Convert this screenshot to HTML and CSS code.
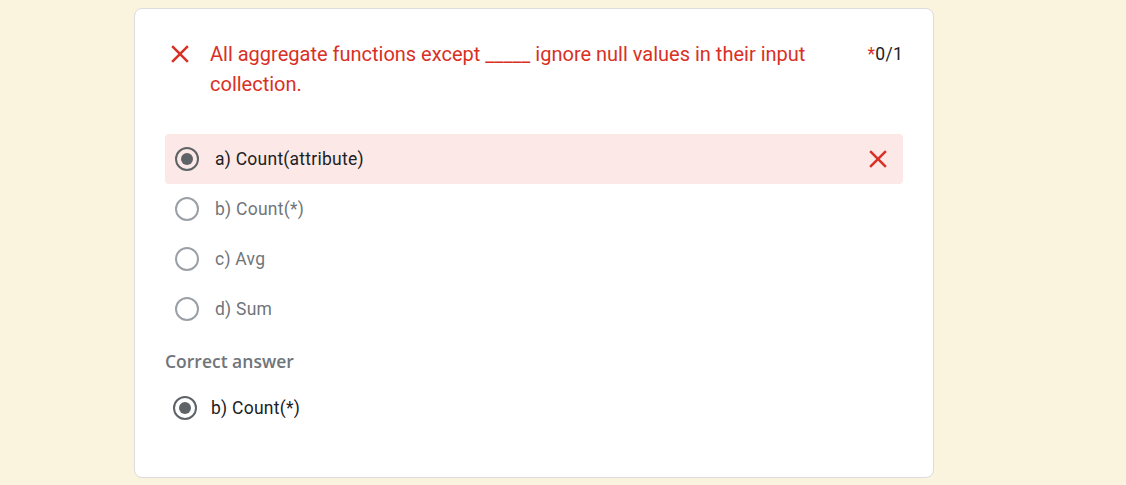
FILE: index.html
```html
<!DOCTYPE html>
<html>
<head>
<meta charset="utf-8">
<link rel="stylesheet" href="styles.css">
</head>
<body>
<div class="card">
  <div class="q-head">
    <svg class="x-icon" viewBox="0 0 24 24"><path d="M19 6.41L17.59 5 12 10.59 6.41 5 5 6.41 10.59 12 5 17.59 6.41 19 12 13.41 17.59 19 19 17.59 13.41 12z"/></svg>
    <div class="q-text">All aggregate functions except _____ ignore null values in their input collection.</div>
    <div class="points"><span class="req">*</span>0/1</div>
  </div>
  <div class="options">
    <div class="opt wrong">
      <span class="radio checked"></span>
      <span class="opt-text sel">a) Count(attribute)</span>
      <svg class="x-icon row-x" viewBox="0 0 24 24"><path d="M19 6.41L17.59 5 12 10.59 6.41 5 5 6.41 10.59 12 5 17.59 6.41 19 12 13.41 17.59 19 19 17.59 13.41 12z"/></svg>
    </div>
    <div class="opt"><span class="radio"></span><span class="opt-text">b) Count(*)</span></div>
    <div class="opt"><span class="radio"></span><span class="opt-text">c) Avg</span></div>
    <div class="opt"><span class="radio"></span><span class="opt-text">d) Sum</span></div>
  </div>
  <div class="correct-label">Correct answer</div>
  <div class="correct">
    <span class="radio checked thick"></span>
    <span class="opt-text sel">b) Count(*)</span>
  </div>
</div>
</body>
</html>
```
FILE: styles.css
```css
html, body { margin: 0; padding: 0; }
body {
  background: #faf3de;
  font-family: Roboto, "Noto Sans", sans-serif;
  height: 485px;
  overflow: hidden;
}
.card {
  box-sizing: border-box;
  margin: 8px 0 0 134px;
  width: 800px;
  height: 470px;
  background: #fff;
  border: 1px solid #dadce0;
  border-radius: 8px;
  padding: 30px 30px 0 30px;
}
.q-head {
  display: flex;
  align-items: flex-start;
}
.x-icon {
  width: 30px;
  height: 30px;
  fill: #d93025;
  flex: none;
}
.q-head .x-icon { margin-right: 15px; }
.q-text {
  flex: 1;
  color: #d93025;
  font-size: 20px;
  line-height: 30px;
  margin-right: 30px;
}
.points {
  font-size: 17.5px;
  letter-spacing: 0.25px;
  line-height: 30px;
  color: #202124;
}
.req { color: #d93025; }
.options { margin-top: 35px; }
.opt {
  display: flex;
  align-items: center;
  height: 50px;
  padding: 0 10px;
  border-radius: 4px;
}
.opt.wrong { background: #fce8e6; }
.radio {
  box-sizing: border-box;
  width: 24px;
  height: 24px;
  border: 2px solid #9aa0a6;
  border-radius: 50%;
  flex: none;
  display: flex;
  align-items: center;
  justify-content: center;
  margin-right: 16px;
}
.radio.checked { border-color: #5f6368; }
.radio.checked::after {
  content: "";
  width: 12px;
  height: 12px;
  border-radius: 50%;
  background: #5f6368;
}
.opt-text {
  flex: 1;
  font-size: 17.5px;
  letter-spacing: 0.25px;
  color: #70757a;
}
.opt-text.sel { color: #202124; }
.correct-label {
  margin-top: 16px;
  font-family: "Open Sans", sans-serif;
  font-weight: 600;
  font-size: 17.5px;
  color: #70757a;
  line-height: 22px;
}
.correct {
  display: flex;
  align-items: center;
  height: 50px;
  padding: 0 8px;
  margin-top: 11px;
}
.radio.thick { border-width: 2.5px; margin-right: 14px; }
```
